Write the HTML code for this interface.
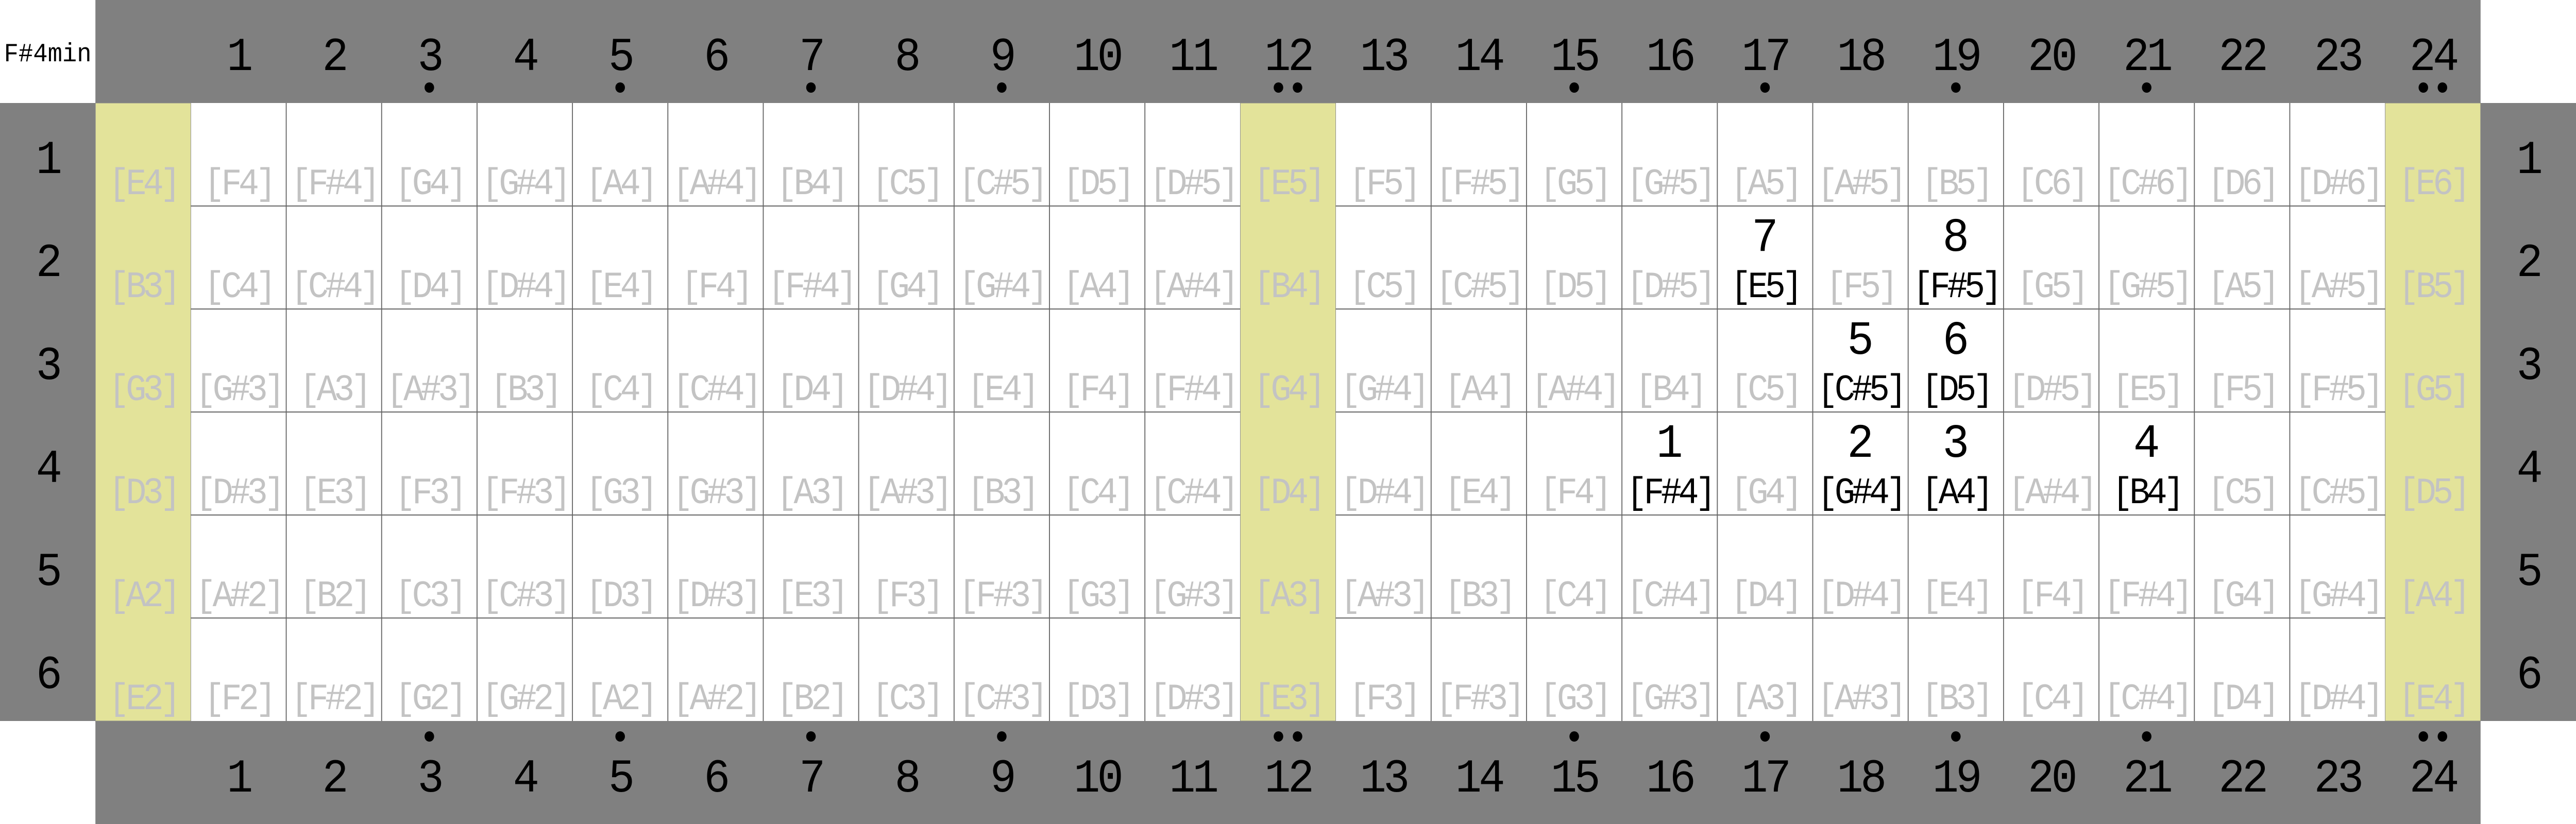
<!DOCTYPE html>
<html><head><meta charset="utf-8"><style>
html,body{margin:0;padding:0;background:#fff;overflow:hidden;width:100vw;height:100vh}
svg{display:block;position:fixed;left:0;top:0;width:100vw;height:100vh}
text{font-family:"Liberation Mono","DejaVu Sans Mono",monospace;text-anchor:middle}
.h{font-size:92px;fill:#000;letter-spacing:-6px}
.n{font-size:72px;fill:#c3c3c3;letter-spacing:-7px}
.b{font-size:72px;fill:#000;letter-spacing:-7px}
.f{font-size:93px;fill:#000}
</style></head><body>
<svg viewBox="0 0 5400 1600" preserveAspectRatio="none" xmlns="http://www.w3.org/2000/svg">
<rect x="0" y="0" width="5400" height="1600" fill="#fff"/>
<rect x="200" y="0" width="5000" height="200" fill="#808080"/>
<rect x="200" y="1400" width="5000" height="200" fill="#808080"/>
<rect x="0" y="200" width="200" height="1200" fill="#808080"/>
<rect x="5200" y="200" width="200" height="1200" fill="#808080"/>
<rect x="200" y="200" width="200" height="1200" fill="#e3e39a" stroke="#888" stroke-width="1"/>
<rect x="2600" y="200" width="200" height="1200" fill="#e3e39a" stroke="#888" stroke-width="1"/>
<rect x="5000" y="200" width="200" height="1200" fill="#e3e39a" stroke="#888" stroke-width="1"/>
<g stroke="#666" stroke-width="2">
<line x1="400" y1="400" x2="2600" y2="400"/><line x1="400" y1="600" x2="2600" y2="600"/><line x1="400" y1="800" x2="2600" y2="800"/><line x1="400" y1="1000" x2="2600" y2="1000"/><line x1="400" y1="1200" x2="2600" y2="1200"/>
<line x1="2800" y1="400" x2="5000" y2="400"/><line x1="2800" y1="600" x2="5000" y2="600"/><line x1="2800" y1="800" x2="5000" y2="800"/><line x1="2800" y1="1000" x2="5000" y2="1000"/><line x1="2800" y1="1200" x2="5000" y2="1200"/>
<line x1="600" y1="200" x2="600" y2="1400"/><line x1="800" y1="200" x2="800" y2="1400"/><line x1="1000" y1="200" x2="1000" y2="1400"/><line x1="1200" y1="200" x2="1200" y2="1400"/><line x1="1400" y1="200" x2="1400" y2="1400"/><line x1="1600" y1="200" x2="1600" y2="1400"/><line x1="1800" y1="200" x2="1800" y2="1400"/><line x1="2000" y1="200" x2="2000" y2="1400"/><line x1="2200" y1="200" x2="2200" y2="1400"/><line x1="2400" y1="200" x2="2400" y2="1400"/>
<line x1="3000" y1="200" x2="3000" y2="1400"/><line x1="3200" y1="200" x2="3200" y2="1400"/><line x1="3400" y1="200" x2="3400" y2="1400"/><line x1="3600" y1="200" x2="3600" y2="1400"/><line x1="3800" y1="200" x2="3800" y2="1400"/><line x1="4000" y1="200" x2="4000" y2="1400"/><line x1="4200" y1="200" x2="4200" y2="1400"/><line x1="4400" y1="200" x2="4400" y2="1400"/><line x1="4600" y1="200" x2="4600" y2="1400"/><line x1="4800" y1="200" x2="4800" y2="1400"/>
</g>
<text x="100" y="119" style="font-size:51px;fill:#000">F#4min</text>

<g class="h">
<text x="500" y="136" class="h">1</text><text x="700" y="136" class="h">2</text><text x="900" y="136" class="h">3</text><text x="1100" y="136" class="h">4</text><text x="1300" y="136" class="h">5</text><text x="1500" y="136" class="h">6</text><text x="1700" y="136" class="h">7</text><text x="1900" y="136" class="h">8</text><text x="2100" y="136" class="h">9</text><text x="2300" y="136" class="h">10</text><text x="2500" y="136" class="h">11</text><text x="2700" y="136" class="h">12</text><text x="2900" y="136" class="h">13</text><text x="3100" y="136" class="h">14</text><text x="3300" y="136" class="h">15</text><text x="3500" y="136" class="h">16</text><text x="3700" y="136" class="h">17</text><text x="3900" y="136" class="h">18</text><text x="4100" y="136" class="h">19</text><text x="4300" y="136" class="h">20</text><text x="4500" y="136" class="h">21</text><text x="4700" y="136" class="h">22</text><text x="4900" y="136" class="h">23</text><text x="5100" y="136" class="h">24</text>
<text x="500" y="1537" class="h">1</text><text x="700" y="1537" class="h">2</text><text x="900" y="1537" class="h">3</text><text x="1100" y="1537" class="h">4</text><text x="1300" y="1537" class="h">5</text><text x="1500" y="1537" class="h">6</text><text x="1700" y="1537" class="h">7</text><text x="1900" y="1537" class="h">8</text><text x="2100" y="1537" class="h">9</text><text x="2300" y="1537" class="h">10</text><text x="2500" y="1537" class="h">11</text><text x="2700" y="1537" class="h">12</text><text x="2900" y="1537" class="h">13</text><text x="3100" y="1537" class="h">14</text><text x="3300" y="1537" class="h">15</text><text x="3500" y="1537" class="h">16</text><text x="3700" y="1537" class="h">17</text><text x="3900" y="1537" class="h">18</text><text x="4100" y="1537" class="h">19</text><text x="4300" y="1537" class="h">20</text><text x="4500" y="1537" class="h">21</text><text x="4700" y="1537" class="h">22</text><text x="4900" y="1537" class="h">23</text><text x="5100" y="1537" class="h">24</text>
<text x="100" y="336" class="h">1</text><text x="100" y="536" class="h">2</text><text x="100" y="736" class="h">3</text><text x="100" y="936" class="h">4</text><text x="100" y="1136" class="h">5</text><text x="100" y="1336" class="h">6</text>
<text x="5300" y="336" class="h">1</text><text x="5300" y="536" class="h">2</text><text x="5300" y="736" class="h">3</text><text x="5300" y="936" class="h">4</text><text x="5300" y="1136" class="h">5</text><text x="5300" y="1336" class="h">6</text>
</g>
<g fill="#000">
<circle cx="900" cy="170" r="10"/><circle cx="1300" cy="170" r="10"/><circle cx="1700" cy="170" r="10"/><circle cx="2100" cy="170" r="10"/><circle cx="2680" cy="170" r="10"/><circle cx="2720" cy="170" r="10"/><circle cx="3300" cy="170" r="10"/><circle cx="3700" cy="170" r="10"/><circle cx="4100" cy="170" r="10"/><circle cx="4500" cy="170" r="10"/><circle cx="5080" cy="170" r="10"/><circle cx="5120" cy="170" r="10"/>
<circle cx="900" cy="1430" r="10"/><circle cx="1300" cy="1430" r="10"/><circle cx="1700" cy="1430" r="10"/><circle cx="2100" cy="1430" r="10"/><circle cx="2680" cy="1430" r="10"/><circle cx="2720" cy="1430" r="10"/><circle cx="3300" cy="1430" r="10"/><circle cx="3700" cy="1430" r="10"/><circle cx="4100" cy="1430" r="10"/><circle cx="4500" cy="1430" r="10"/><circle cx="5080" cy="1430" r="10"/><circle cx="5120" cy="1430" r="10"/>
</g>

<text class="n" x="300" y="377">[E4]</text><text class="n" x="500" y="377">[F4]</text><text class="n" x="700" y="377">[F#4]</text><text class="n" x="900" y="377">[G4]</text><text class="n" x="1100" y="377">[G#4]</text><text class="n" x="1300" y="377">[A4]</text><text class="n" x="1500" y="377">[A#4]</text><text class="n" x="1700" y="377">[B4]</text><text class="n" x="1900" y="377">[C5]</text><text class="n" x="2100" y="377">[C#5]</text><text class="n" x="2300" y="377">[D5]</text><text class="n" x="2500" y="377">[D#5]</text><text class="n" x="2700" y="377">[E5]</text><text class="n" x="2900" y="377">[F5]</text><text class="n" x="3100" y="377">[F#5]</text><text class="n" x="3300" y="377">[G5]</text><text class="n" x="3500" y="377">[G#5]</text><text class="n" x="3700" y="377">[A5]</text><text class="n" x="3900" y="377">[A#5]</text><text class="n" x="4100" y="377">[B5]</text><text class="n" x="4300" y="377">[C6]</text><text class="n" x="4500" y="377">[C#6]</text><text class="n" x="4700" y="377">[D6]</text><text class="n" x="4900" y="377">[D#6]</text><text class="n" x="5100" y="377">[E6]</text>
<text class="n" x="300" y="577">[B3]</text><text class="n" x="500" y="577">[C4]</text><text class="n" x="700" y="577">[C#4]</text><text class="n" x="900" y="577">[D4]</text><text class="n" x="1100" y="577">[D#4]</text><text class="n" x="1300" y="577">[E4]</text><text class="n" x="1500" y="577">[F4]</text><text class="n" x="1700" y="577">[F#4]</text><text class="n" x="1900" y="577">[G4]</text><text class="n" x="2100" y="577">[G#4]</text><text class="n" x="2300" y="577">[A4]</text><text class="n" x="2500" y="577">[A#4]</text><text class="n" x="2700" y="577">[B4]</text><text class="n" x="2900" y="577">[C5]</text><text class="n" x="3100" y="577">[C#5]</text><text class="n" x="3300" y="577">[D5]</text><text class="n" x="3500" y="577">[D#5]</text><text class="b" x="3700" y="577">[E5]</text><text class="n" x="3900" y="577">[F5]</text><text class="b" x="4100" y="577">[F#5]</text><text class="n" x="4300" y="577">[G5]</text><text class="n" x="4500" y="577">[G#5]</text><text class="n" x="4700" y="577">[A5]</text><text class="n" x="4900" y="577">[A#5]</text><text class="n" x="5100" y="577">[B5]</text>
<text class="f" x="3700" y="487">7</text><text class="f" x="4100" y="487">8</text>
<text class="n" x="300" y="777">[G3]</text><text class="n" x="500" y="777">[G#3]</text><text class="n" x="700" y="777">[A3]</text><text class="n" x="900" y="777">[A#3]</text><text class="n" x="1100" y="777">[B3]</text><text class="n" x="1300" y="777">[C4]</text><text class="n" x="1500" y="777">[C#4]</text><text class="n" x="1700" y="777">[D4]</text><text class="n" x="1900" y="777">[D#4]</text><text class="n" x="2100" y="777">[E4]</text><text class="n" x="2300" y="777">[F4]</text><text class="n" x="2500" y="777">[F#4]</text><text class="n" x="2700" y="777">[G4]</text><text class="n" x="2900" y="777">[G#4]</text><text class="n" x="3100" y="777">[A4]</text><text class="n" x="3300" y="777">[A#4]</text><text class="n" x="3500" y="777">[B4]</text><text class="n" x="3700" y="777">[C5]</text><text class="b" x="3900" y="777">[C#5]</text><text class="b" x="4100" y="777">[D5]</text><text class="n" x="4300" y="777">[D#5]</text><text class="n" x="4500" y="777">[E5]</text><text class="n" x="4700" y="777">[F5]</text><text class="n" x="4900" y="777">[F#5]</text><text class="n" x="5100" y="777">[G5]</text>
<text class="f" x="3900" y="687">5</text><text class="f" x="4100" y="687">6</text>
<text class="n" x="300" y="977">[D3]</text><text class="n" x="500" y="977">[D#3]</text><text class="n" x="700" y="977">[E3]</text><text class="n" x="900" y="977">[F3]</text><text class="n" x="1100" y="977">[F#3]</text><text class="n" x="1300" y="977">[G3]</text><text class="n" x="1500" y="977">[G#3]</text><text class="n" x="1700" y="977">[A3]</text><text class="n" x="1900" y="977">[A#3]</text><text class="n" x="2100" y="977">[B3]</text><text class="n" x="2300" y="977">[C4]</text><text class="n" x="2500" y="977">[C#4]</text><text class="n" x="2700" y="977">[D4]</text><text class="n" x="2900" y="977">[D#4]</text><text class="n" x="3100" y="977">[E4]</text><text class="n" x="3300" y="977">[F4]</text><text class="b" x="3500" y="977">[F#4]</text><text class="n" x="3700" y="977">[G4]</text><text class="b" x="3900" y="977">[G#4]</text><text class="b" x="4100" y="977">[A4]</text><text class="n" x="4300" y="977">[A#4]</text><text class="b" x="4500" y="977">[B4]</text><text class="n" x="4700" y="977">[C5]</text><text class="n" x="4900" y="977">[C#5]</text><text class="n" x="5100" y="977">[D5]</text>
<text class="f" x="3500" y="887">1</text><text class="f" x="3900" y="887">2</text><text class="f" x="4100" y="887">3</text><text class="f" x="4500" y="887">4</text>
<text class="n" x="300" y="1177">[A2]</text><text class="n" x="500" y="1177">[A#2]</text><text class="n" x="700" y="1177">[B2]</text><text class="n" x="900" y="1177">[C3]</text><text class="n" x="1100" y="1177">[C#3]</text><text class="n" x="1300" y="1177">[D3]</text><text class="n" x="1500" y="1177">[D#3]</text><text class="n" x="1700" y="1177">[E3]</text><text class="n" x="1900" y="1177">[F3]</text><text class="n" x="2100" y="1177">[F#3]</text><text class="n" x="2300" y="1177">[G3]</text><text class="n" x="2500" y="1177">[G#3]</text><text class="n" x="2700" y="1177">[A3]</text><text class="n" x="2900" y="1177">[A#3]</text><text class="n" x="3100" y="1177">[B3]</text><text class="n" x="3300" y="1177">[C4]</text><text class="n" x="3500" y="1177">[C#4]</text><text class="n" x="3700" y="1177">[D4]</text><text class="n" x="3900" y="1177">[D#4]</text><text class="n" x="4100" y="1177">[E4]</text><text class="n" x="4300" y="1177">[F4]</text><text class="n" x="4500" y="1177">[F#4]</text><text class="n" x="4700" y="1177">[G4]</text><text class="n" x="4900" y="1177">[G#4]</text><text class="n" x="5100" y="1177">[A4]</text>
<text class="n" x="300" y="1377">[E2]</text><text class="n" x="500" y="1377">[F2]</text><text class="n" x="700" y="1377">[F#2]</text><text class="n" x="900" y="1377">[G2]</text><text class="n" x="1100" y="1377">[G#2]</text><text class="n" x="1300" y="1377">[A2]</text><text class="n" x="1500" y="1377">[A#2]</text><text class="n" x="1700" y="1377">[B2]</text><text class="n" x="1900" y="1377">[C3]</text><text class="n" x="2100" y="1377">[C#3]</text><text class="n" x="2300" y="1377">[D3]</text><text class="n" x="2500" y="1377">[D#3]</text><text class="n" x="2700" y="1377">[E3]</text><text class="n" x="2900" y="1377">[F3]</text><text class="n" x="3100" y="1377">[F#3]</text><text class="n" x="3300" y="1377">[G3]</text><text class="n" x="3500" y="1377">[G#3]</text><text class="n" x="3700" y="1377">[A3]</text><text class="n" x="3900" y="1377">[A#3]</text><text class="n" x="4100" y="1377">[B3]</text><text class="n" x="4300" y="1377">[C4]</text><text class="n" x="4500" y="1377">[C#4]</text><text class="n" x="4700" y="1377">[D4]</text><text class="n" x="4900" y="1377">[D#4]</text><text class="n" x="5100" y="1377">[E4]</text>
</svg>
</body></html>
